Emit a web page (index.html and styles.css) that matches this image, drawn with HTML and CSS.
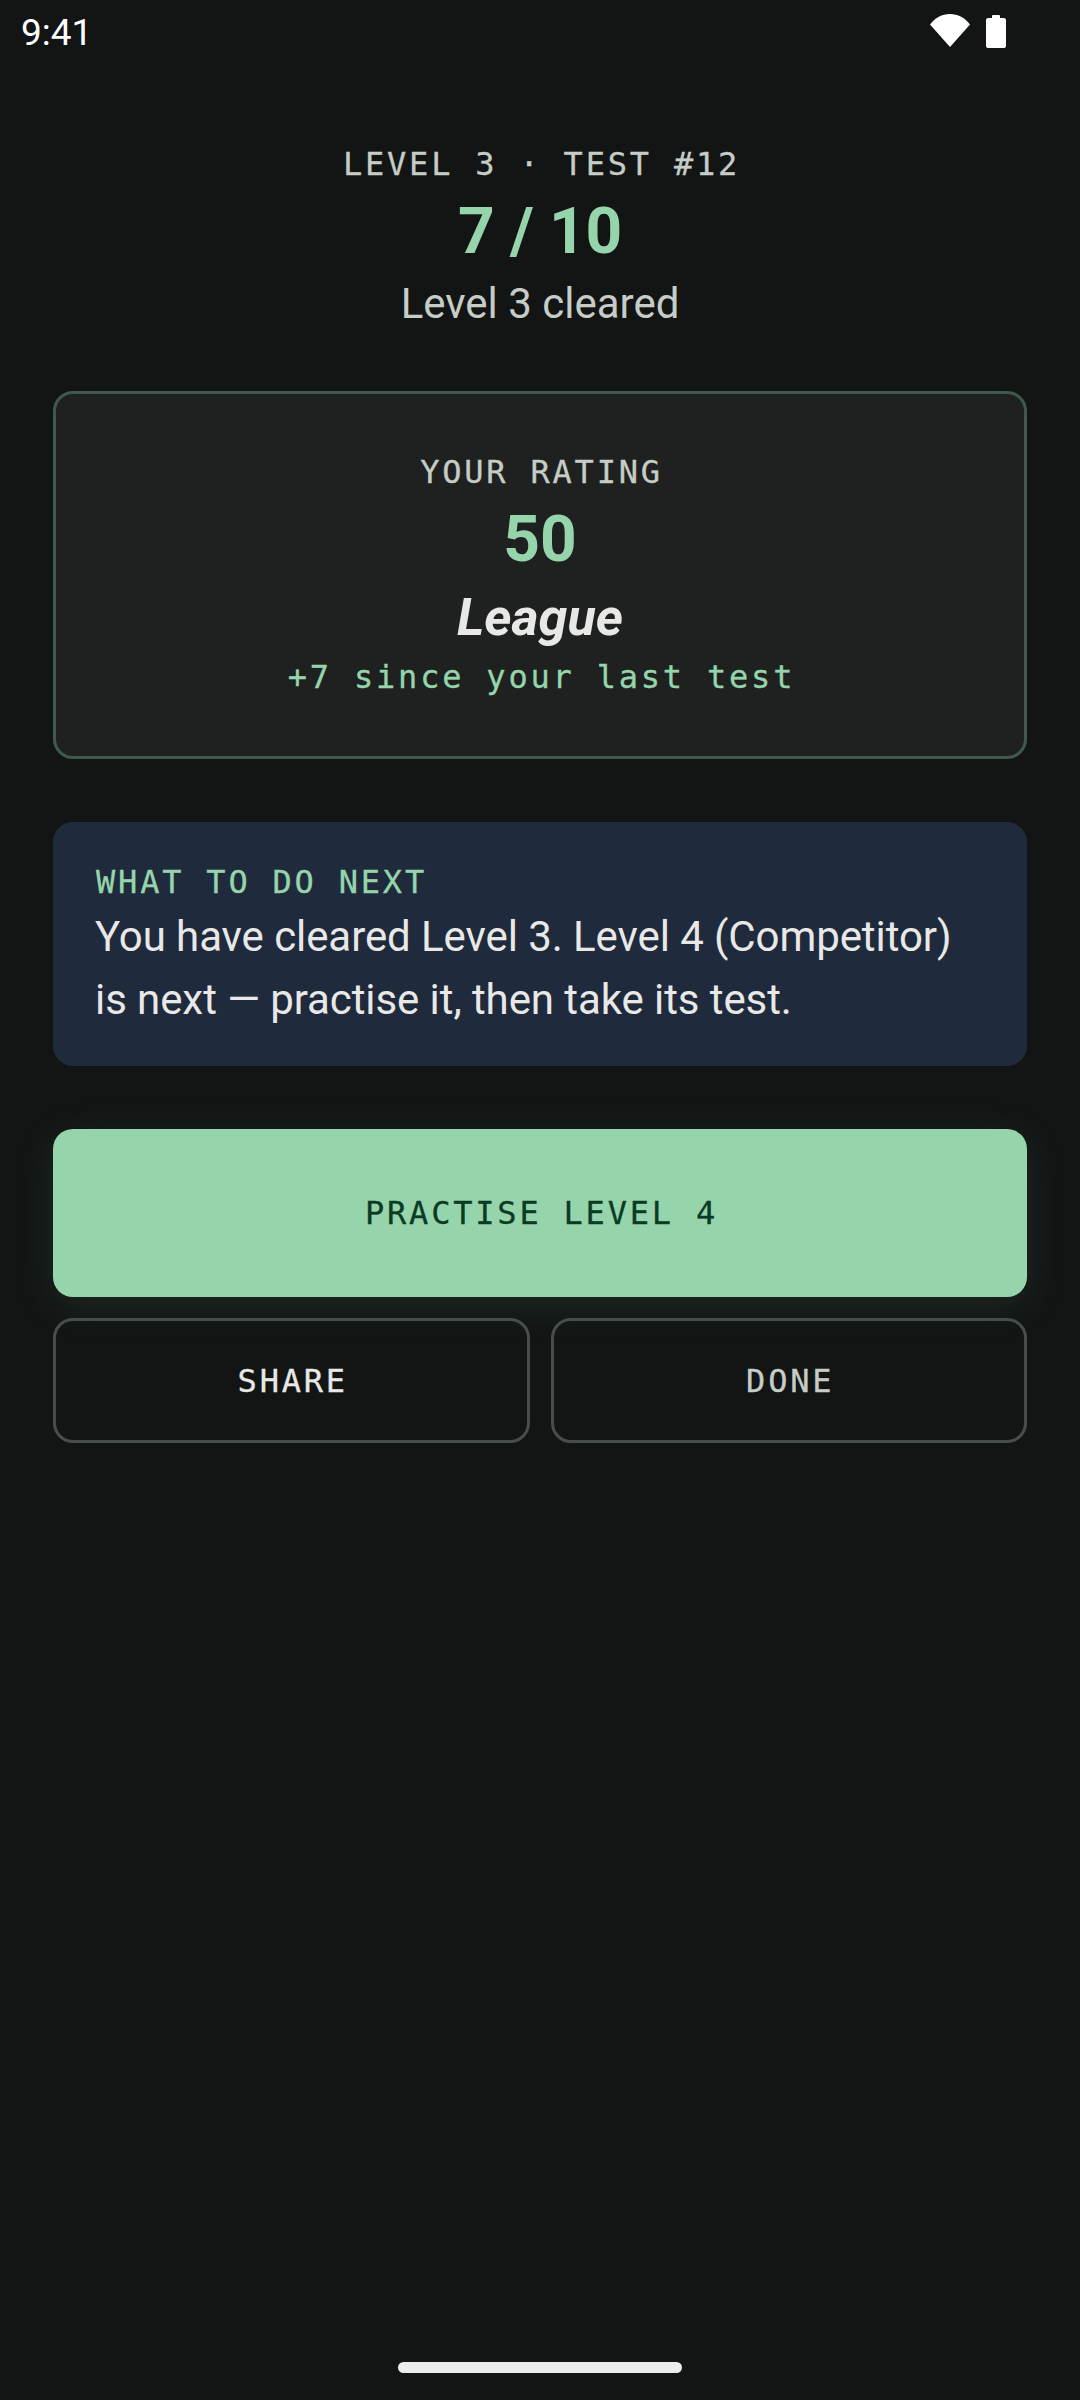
FILE: index.html
```html
<!DOCTYPE html>
<html lang="en">
<head>
    <meta charset="UTF-8">
    <meta name="viewport" content="width=device-width, initial-scale=1.0">
    <title>Test result</title>
    <link rel="stylesheet" href="styles.css">
</head>
<body>
    <div class="status-bar">
        <span class="clock">9:41</span>
        <div class="status-icons">
            <svg class="icon-wifi" width="40" height="33" viewBox="0 0 40 33">
                <path d="M0 10.5C5 4 12 0 20 0s15 4 20 10.5L20 33z" fill="#fff"/>
            </svg>
            <svg class="icon-battery" width="20" height="34" viewBox="0 0 20 34">
                <path d="M6 2a1 1 0 0 1 1-1h6a1 1 0 0 1 1 1v2h4a2 2 0 0 1 2 2v26a2 2 0 0 1-2 2H2a2 2 0 0 1-2-2V6a2 2 0 0 1 2-2h4z" fill="#fff"/>
            </svg>
        </div>
    </div>

    <div class="content">
        <div class="result-head">
            <div class="mono-label centered">LEVEL 3 · TEST #12</div>
            <div class="score">7 / 10</div>
            <div class="verdict">Level 3 cleared</div>
        </div>

        <div class="rating-card">
            <div class="mono-label centered">YOUR RATING</div>
            <div class="rating-value">50</div>
            <div class="rating-league">League</div>
            <div class="mono-label centered rating-delta">+7 since your last test</div>
        </div>

        <div class="next-card">
            <div class="mono-label next-title">WHAT TO DO NEXT</div>
            <p class="next-text">You have cleared Level 3. Level 4 (Competitor) is next — practise it, then take its test.</p>
        </div>

        <button class="btn-primary">PRACTISE LEVEL 4</button>
        <div class="btn-row">
            <button class="btn-outline btn-share">SHARE</button>
            <button class="btn-outline btn-done">DONE</button>
        </div>
    </div>

    <div class="home-indicator"></div>
</body>
</html>
```

FILE: styles.css
```css
html, body {
    margin: 0;
    padding: 0;
}
body {
    width: 1080px;
    height: 2400px;
    display: flex;
    flex-direction: column;
    background-color: #121514;
    color: #e8e8e6;
    font-family: Roboto, sans-serif;
    overflow: hidden;
}
.status-bar {
    display: flex;
    justify-content: space-between;
    align-items: flex-start;
    height: 66px;
    padding: 0 74px 0 21px;
}
.clock {
    font-size: 37px;
    line-height: 42px;
    margin-top: 12px;
    color: #fff;
}
.status-icons {
    display: flex;
    gap: 16px;
    margin-top: 14px;
}
.content {
    flex: 1;
    padding: 0 53px;
}
.mono-label {
    font-family: "DejaVu Sans Mono", monospace;
    font-size: 32px;
    line-height: 38px;
    letter-spacing: 2.8px;
    -webkit-text-stroke: 0.3px currentColor;
    color: #c6ccc6;
}
.centered {
    text-indent: 3px;
}
.result-head {
    text-align: center;
    padding-top: 79px;
}
.score {
    font-size: 64px;
    font-weight: 700;
    line-height: 76px;
    margin-top: 11px;
    letter-spacing: -0.3px;
    color: #96d5ac;
}
.verdict {
    font-size: 42px;
    line-height: 50px;
    margin-top: 9px;
    color: #c6ccc6;
}
.rating-card {
    margin-top: 62px;
    height: 368px;
    box-sizing: border-box;
    padding-top: 59px;
    text-align: center;
    background-color: #1e211f;
    border: 3px solid #3f5a4d;
    border-radius: 20px;
}
.rating-value {
    font-size: 64px;
    font-weight: 700;
    line-height: 76px;
    margin-top: 11px;
    color: #96d5ac;
}
.rating-league {
    font-size: 52px;
    font-weight: 700;
    font-style: italic;
    line-height: 60px;
    margin-top: 10px;
}
.rating-delta {
    color: #96d5ac;
    margin-top: 10px;
}
.next-card {
    margin-top: 63px;
    height: 244px;
    box-sizing: border-box;
    padding: 41px 42px 0;
    background-color: #1f2a3c;
    border-radius: 20px;
}
.next-title {
    color: #96d5ac;
    text-indent: 1px;
}
.next-text {
    margin: 4px 0 0;
    font-size: 42px;
    line-height: 63px;
    letter-spacing: -0.08px;
}
.btn-primary, .btn-outline {
    display: block;
    width: 100%;
    font-family: "DejaVu Sans Mono", monospace;
    font-size: 32px;
    letter-spacing: 2.8px;
    -webkit-text-stroke: 0.3px currentColor;
    text-indent: 3px;
    cursor: pointer;
}
.btn-primary {
    margin-top: 63px;
    height: 168px;
    border: none;
    border-radius: 20px;
    background-color: #96d5ac;
    color: #0b3b24;
    box-shadow: 0 8px 40px rgba(150, 213, 172, 0.1);
}
.btn-row {
    display: flex;
    gap: 21px;
    margin-top: 21px;
}
.btn-outline {
    flex: 1;
    height: 125px;
    background-color: transparent;
    border: 3px solid #464e49;
    border-radius: 20px;
}
.btn-share {
    color: #e8e8e6;
}
.btn-done {
    color: #c6ccc6;
}
.home-indicator {
    align-self: center;
    width: 284px;
    height: 11px;
    margin-bottom: 27px;
    border-radius: 6px;
    background-color: #ececec;
}
```
